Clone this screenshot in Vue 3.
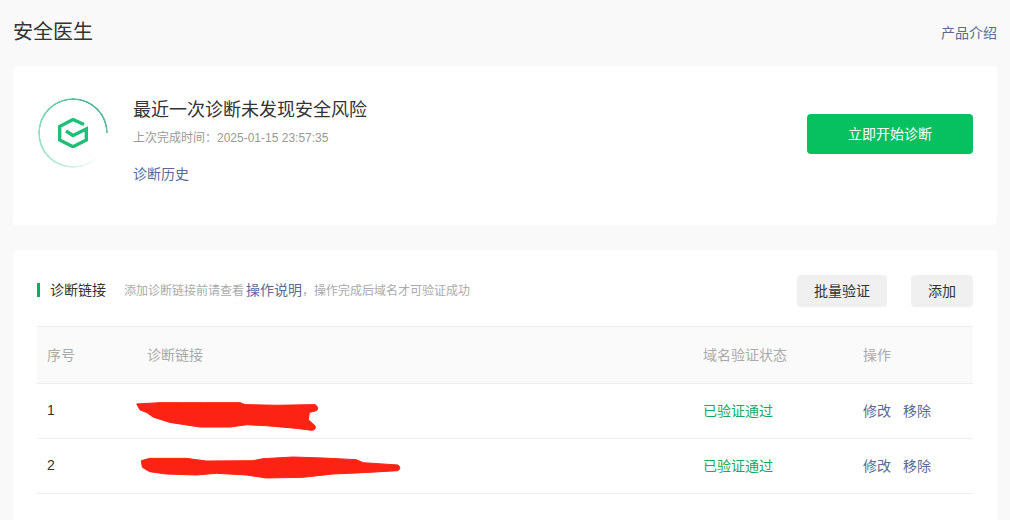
<script setup>
const rows = [
  {
    id: 1,
    box: '45 30 555 100',
    cls: 'scribble-a',
    d: 'M50 42 L120 38 L190 38 L250 38 L360 38 L375 44 L470 46 L585 44 Q598 52 590 62 L568 68 L565 90 L585 108 Q590 120 575 122 L530 116 L440 108 L380 105 L330 112 L240 112 L150 98 L100 82 L80 68 L60 60 Z'
  },
  {
    id: 2,
    box: '55 195 795 75',
    cls: 'scribble-b',
    d: 'M65 212 L90 205 L200 205 L260 213 L400 212 L430 206 L520 201 L610 204 L710 209 L730 218 L835 225 Q846 233 835 242 L730 248 L640 252 L550 262 L440 264 L380 255 L290 250 L230 255 L140 252 L90 245 L68 232 Z'
  }
]
</script>

<template>
  <div class="page">
    <header class="top">
      <h1 class="title">安全医生</h1>
      <a class="link">产品介绍</a>
    </header>

    <section class="card hero">
      <div class="ring-wrap">
        <div class="ring"></div>
        <svg class="logo" viewBox="0 0 30 30" width="30" height="30" fill="none" stroke="#1fbf7a" stroke-width="3.4" stroke-linejoin="miter">
          <path d="M26 6.5 L15 1.5 L1.7 8.5 V22 L15 28.8 L28.3 22 V11 L15 17.5 L8 13" />
        </svg>
      </div>
      <div class="hero-text">
        <h2 class="hero-title">最近一次诊断未发现安全风险</h2>
        <p class="hero-time">上次完成时间：2025-01-15 23:57:35</p>
        <a class="link hero-history">诊断历史</a>
      </div>
      <button class="primary">立即开始诊断</button>
    </section>

    <section class="card links">
      <div class="links-head">
        <span class="mark"></span>
        <span class="links-title">诊断链接</span>
        <span class="links-tip">添加诊断链接前请查看<a class="link tip-link">操作说明</a>，操作完成后域名才可验证成功</span>
        <div class="actions">
          <button class="plain batch">批量验证</button>
          <button class="plain add">添加</button>
        </div>
      </div>

      <div class="table">
        <div class="row head">
          <div>序号</div>
          <div>诊断链接</div>
          <div>域名验证状态</div>
          <div>操作</div>
        </div>
        <div v-for="row in rows" :key="row.id" class="row">
          <div class="num">{{ row.id }}</div>
          <div class="url">
            <svg :class="['scribble', row.cls]" :viewBox="row.box" preserveAspectRatio="none">
              <path :d="row.d" fill="#fc2314" stroke="#fc2314" stroke-width="3" stroke-linejoin="round" />
            </svg>
          </div>
          <div class="ok">已验证通过</div>
          <div class="ops"><a class="link">修改</a><a class="link">移除</a></div>
        </div>
      </div>
    </section>
  </div>
</template>

<style>
html, body { margin: 0; background: #f9f9f9; overflow: hidden; }
</style>

<style scoped>
.page {
  box-sizing: border-box;
  width: 1010px;
  height: 520px;
  padding: 0 13px;
  overflow: hidden;
  background: #f9f9f9;
  font-family: "Liberation Sans", "Noto Sans CJK SC", sans-serif;
  font-size: 14px;
  color: #333;
}
.top {
  display: flex;
  align-items: center;
  justify-content: space-between;
  height: 66px;
  padding-bottom: 2px;
  box-sizing: border-box;
}
.title {
  margin: 0;
  font-size: 20px;
  font-weight: 400;
  line-height: 28px;
  color: #333;
}
.link { color: #576b95; text-decoration: none; }
.card { background: #fff; border-radius: 4px; }
.hero {
  display: flex;
  align-items: flex-start;
  height: 159px;
  padding: 0 24px;
  box-sizing: border-box;
}
.ring-wrap {
  position: relative;
  width: 72px;
  height: 72px;
  flex: none;
  margin: 31px 24px 0 0;
  display: flex;
  align-items: center;
  justify-content: center;
}
.ring {
  position: absolute;
  inset: 1px;
  border-radius: 50%;
  background: conic-gradient(from 90deg, rgba(31,191,122,0) 0%, rgba(31,191,122,0) 12%, rgba(31,191,122,.3) 30%, rgba(31,191,122,.55) 55%, rgba(31,170,122,.8) 80%, #62bd9c 100%);
  -webkit-mask: radial-gradient(circle, transparent 32.8px, #000 33.3px);
  mask: radial-gradient(circle, transparent 32.8px, #000 33.3px);
}
.hero-text { flex: 1; margin-top: 31px; }
.hero-title {
  margin: 0;
  font-size: 18px;
  font-weight: 400;
  line-height: 26px;
  color: #333;
}
.hero-time {
  margin: 6px 0 0;
  font-size: 12px;
  line-height: 18px;
  color: #999;
}
.hero-history { display: block; margin-top: 17px; line-height: 20px; }
button {
  font-family: inherit;
  border: 0;
  border-radius: 4px;
  padding: 0 0 2px;
  font-size: 14px;
}
.primary {
  width: 166px;
  height: 40px;
  margin-top: 48px;
  background: #07c160;
  color: #fff;
}
.links {
  margin-top: 25px;
  padding: 25px 24px;
  height: 300px;
  box-sizing: border-box;
}
.links-head {
  display: flex;
  align-items: center;
  height: 32px;
  margin-bottom: 19px;
}
.mark {
  width: 3px;
  height: 14px;
  margin-top: -3px;
  background: #07b060;
  margin-right: 10px;
}
.links-title { margin: -5px 18px 0 0; color: #333; }
.links-tip { margin-top: -5px; font-size: 12px; color: #aaa; flex: 1; }
.tip-link { font-size: 14px; margin-left: 2px; }
.actions { display: flex; gap: 24px; }
.plain { height: 32px; background: #f0f0f0; color: #333; }
.batch { width: 90px; }
.add { width: 62px; }
.row {
  display: grid;
  grid-template-columns: 100px 556px 160px 1fr;
  height: 55px;
  align-items: center;
  border-bottom: 1px solid #eee;
  box-sizing: border-box;
}
.row > div { padding: 0 0 3px 10px; }
.row.head {
  height: 58px;
  background: #fafafa;
  border-top: 1px solid #eee;
  color: #aaa;
}
.row > .url { position: relative; height: 100%; padding: 0; }
.scribble { position: absolute; display: block; }
.scribble-a { left: -2px; top: 16px; width: 185px; height: 33px; }
.scribble-b { left: 1px; top: 16px; width: 265px; height: 25px; }
.ok { color: #12ab5f; }
.ops { display: flex; gap: 12px; }
</style>
